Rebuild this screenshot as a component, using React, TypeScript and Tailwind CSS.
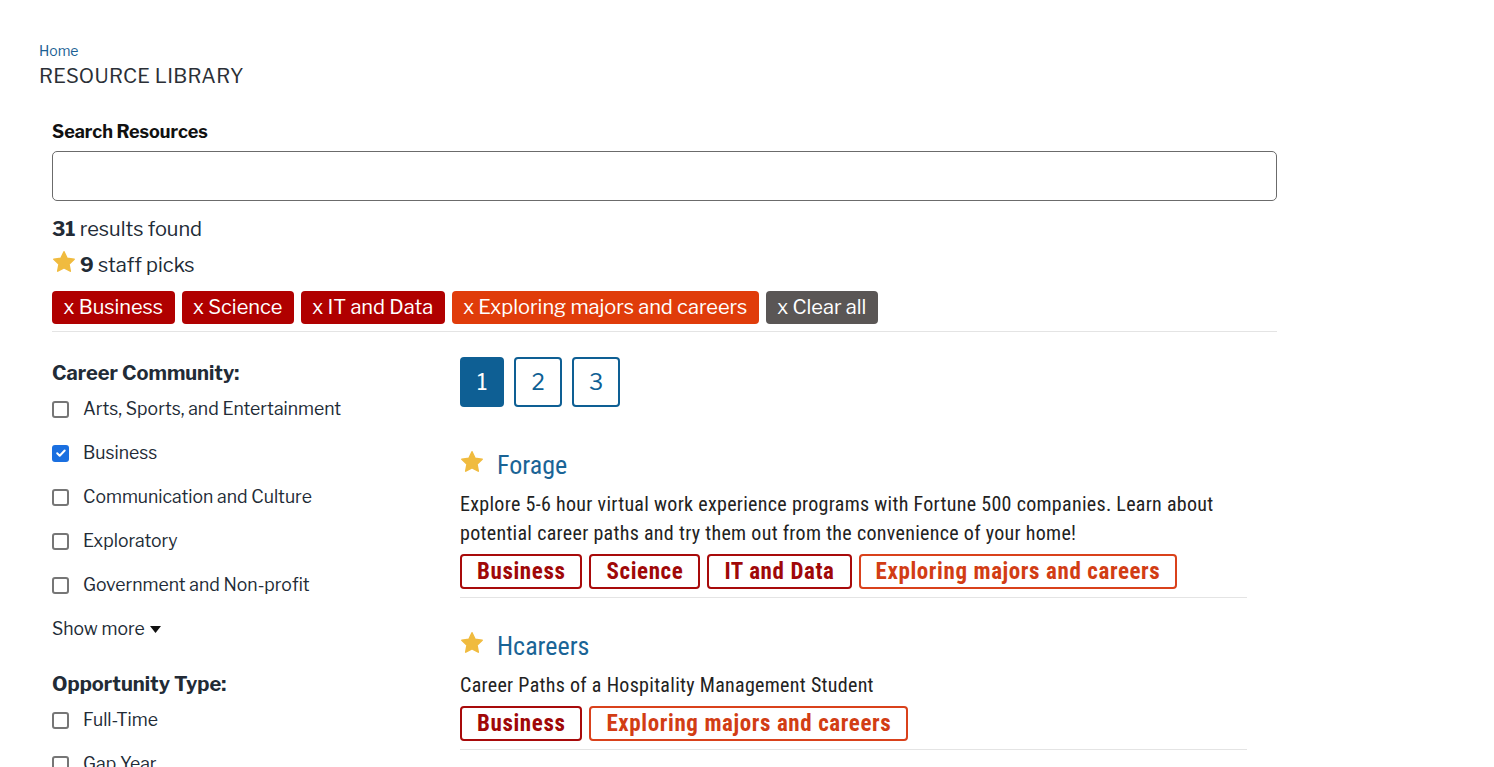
import React from "react";

const activeFilters = [
  { label: "x Business", color: "bg-[#b00000]" },
  { label: "x Science", color: "bg-[#b00000]" },
  { label: "x IT and Data", color: "bg-[#b00000]" },
  { label: "x Exploring majors and careers", color: "bg-[#e03c0a]" },
  { label: "x Clear all", color: "bg-[#5a5655]" },
];

const communities = [
  { label: "Arts, Sports, and Entertainment", checked: false },
  { label: "Business", checked: true },
  { label: "Communication and Culture", checked: false },
  { label: "Exploratory", checked: false },
  { label: "Government and Non-profit", checked: false },
];

const opportunityTypes = ["Full-Time", "Gap Year"];

type Tag = { label: string; orange?: boolean };

const results: { title: string; description: string; tags: Tag[] }[] = [
  {
    title: "Forage",
    description:
      "Explore 5-6 hour virtual work experience programs with Fortune 500 companies. Learn about potential career paths and try them out from the convenience of your home!",
    tags: [
      { label: "Business" },
      { label: "Science" },
      { label: "IT and Data" },
      { label: "Exploring majors and careers", orange: true },
    ],
  },
  {
    title: "Hcareers",
    description: "Career Paths of a Hospitality Management Student",
    tags: [{ label: "Business" }, { label: "Exploring majors and careers", orange: true }],
  },
];

const sans = { fontFamily: "'Libre Franklin', Roboto, 'Liberation Sans', sans-serif" };
const narrow = { fontFamily: "'Liberation Sans Narrow', 'Roboto Condensed', Roboto, sans-serif" };

function Star({ size = 24 }: { size?: number }) {
  return (
    <svg width={size} height={size} viewBox="0 0 24 24" aria-hidden="true">
      <path
        d="M12 1.8l3.1 6.5 7.1.9-5.2 4.9 1.3 7.1L12 17.8l-6.3 3.4 1.3-7.1L1.8 9.2l7.1-.9z"
        fill="#f0bb3f"
        stroke="#f0bb3f"
        strokeWidth="1.5"
        strokeLinejoin="round"
      />
    </svg>
  );
}

function Checkbox({ checked }: { checked: boolean }) {
  if (checked) {
    return (
      <span className="flex h-[17px] w-[17px] items-center justify-center rounded-[3px] bg-[#1a6fe0]">
        <svg width="12" height="12" viewBox="0 0 12 12">
          <path d="M2.2 6.2l2.5 2.5 5-5.2" fill="none" stroke="white" strokeWidth="2" strokeLinecap="round" strokeLinejoin="round" />
        </svg>
      </span>
    );
  }
  return <span className="block h-[17px] w-[17px] rounded-[3px] border-2 border-[#767676] bg-white" />;
}

export default function App() {
  return (
    <div className="min-h-screen bg-white text-[#222b36]" style={sans}>
      <div className="px-[39px] pt-[42px]">
        {/* Breadcrumb */}
        <a className="block text-[14px] leading-[18px] text-[#1b5f94]">Home</a>
        <h1 className="mt-[3px] text-[20px] leading-[26px] tracking-[0.3px] text-[#2b2f36]">RESOURCE LIBRARY</h1>

        <div className="ml-[13px] w-[1225px]">
          {/* Search */}
          <label className="mt-[31px] block text-[18px] font-bold leading-[24px] text-[#111]">Search Resources</label>
          <input className="mt-[7px] block h-[50px] w-full rounded-[5px] border border-[#6b6b6b] px-3 text-[18px] outline-none" />

          <p className="mt-[15px] text-[20px] leading-[26px]">
            <span className="font-bold">31</span> results found
          </p>
          <p className="mt-[10px] flex items-center gap-[4px] text-[20px] leading-[26px]">
            <span className="-mt-[6px]">
              <Star size={24} />
            </span>
            <span>
              <span className="font-bold">9</span> staff picks
            </span>
          </p>

          {/* Active filters */}
          <div className="mt-[13px] flex gap-[7px]">
            {activeFilters.map((f) => (
              <button
                key={f.label}
                className={`h-[33px] rounded-[4px] px-[11.5px] text-[20px] leading-[33px] text-white ${f.color}`}
              >
                {f.label}
              </button>
            ))}
          </div>
          <div className="mt-[7px] border-t border-[#e4e4e4]" />

          <div className="flex">
            {/* Sidebar filters */}
            <aside className="w-[408px] shrink-0 pt-[28px]">
              <h2 className="text-[20px] font-bold leading-[26px]">Career Community:</h2>
              <ul className="mt-[1px]">
                {communities.map((c) => (
                  <li key={c.label} className="flex h-[44px] items-center gap-[14px] text-[17.6px]">
                    <Checkbox checked={c.checked} />
                    <span>{c.label}</span>
                  </li>
                ))}
              </ul>
              <button className="flex h-[44px] items-center gap-[5px] text-[17.6px]">
                Show more
                <svg width="11" height="7" viewBox="0 0 11 7">
                  <path d="M0 0h11L5.5 7z" fill="#111" />
                </svg>
              </button>
              <h2 className="mt-[20px] text-[20px] font-bold leading-[26px]">Opportunity Type:</h2>
              <ul className="mt-[1px]">
                {opportunityTypes.map((o) => (
                  <li key={o} className="flex h-[44px] items-center gap-[14px] text-[17.6px]">
                    <Checkbox checked={false} />
                    <span>{o}</span>
                  </li>
                ))}
              </ul>
            </aside>

            {/* Results */}
            <main className="w-[787px] pt-[25px]">
              <div className="flex gap-[10px]">
                <button className="h-[50px] w-[44px] rounded-[4px] bg-[#0e5f94] text-[22px] text-white">1</button>
                <button className="h-[50px] w-[48px] rounded-[4px] border-2 border-[#0e5f94] text-[22px] text-[#0e5f94]">2</button>
                <button className="h-[50px] w-[48px] rounded-[4px] border-2 border-[#0e5f94] text-[22px] text-[#0e5f94]">3</button>
              </div>

              <div className="mt-[43px]">
                {results.map((r, i) => (
                  <article key={r.title} className={`${i > 0 ? "pt-[33px]" : ""}`}>
                    <div className="flex items-center gap-[13px]">
                      <span className="-mt-[6px]">
                        <Star size={24} />
                      </span>
                      <a className="text-[26px] leading-[30px] text-[#1a6496]" style={narrow}>
                        {r.title}
                      </a>
                    </div>
                    <p className="mt-[10px] text-[20px] leading-[29px] tracking-[0.3px] text-[#222]" style={narrow}>
                      {r.description}
                    </p>
                    <div className="mt-[6px] flex gap-[7px] pb-[8px]" style={narrow}>
                      {r.tags.map((t) => (
                        <span
                          key={t.label}
                          className={`h-[35px] rounded-[4px] border-2 px-[15px] text-[23px] font-bold leading-[31px] tracking-[0.6px] ${
                            t.orange ? "border-[#d9411b] text-[#d23d14]" : "border-[#a80a0a] text-[#a00808]"
                          }`}
                        >
                          {t.label}
                        </span>
                      ))}
                    </div>
                    <div className="border-t border-[#e4e4e4]" />
                  </article>
                ))}
              </div>
            </main>
          </div>
        </div>
      </div>
    </div>
  );
}
